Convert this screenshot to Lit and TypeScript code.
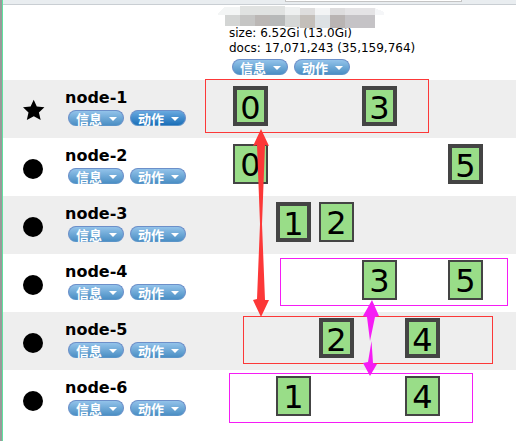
import { LitElement, html, css, svg } from "lit";
import { customElement, property } from "lit/decorators.js";

interface Shard {
  id: number;
  primary: boolean;
}

interface ClusterNode {
  name: string;
  master?: boolean;
  shards: Shard[];
}

const SHARD_COUNT = 6;

const p = (id: number): Shard => ({ id, primary: true });
const r = (id: number): Shard => ({ id, primary: false });

const NODES: ClusterNode[] = [
  { name: "node-1", master: true, shards: [p(0), p(3)] },
  { name: "node-2", shards: [r(0), p(5)] },
  { name: "node-3", shards: [p(1), r(2)] },
  { name: "node-4", shards: [r(3), r(5)] },
  { name: "node-5", shards: [p(2), p(4)] },
  { name: "node-6", shards: [r(1), r(4)] },
];

@customElement("menu-button")
export class MenuButton extends LitElement {
  @property() label = "";
  @property({ type: Boolean }) active = false;

  static styles = css`
    :host {
      display: block;
    }
    button {
      display: flex;
      align-items: center;
      gap: 7px;
      box-sizing: border-box;
      height: 16px;
      margin: 0;
      padding: 1px 6px 0 7px;
      border: 1px solid #6c8fc9;
      border-bottom-color: #5b94c8;
      border-radius: 8px;
      background: linear-gradient(#93c3ea, #4b8fc4);
      color: #fff;
      font: bold 13px/14px "Noto Sans CJK SC", sans-serif;
    }
    button.active {
      background: linear-gradient(#6aaae0, #1b6fb8);
    }
    .arrow {
      border: 4px solid transparent;
      border-top-color: #fff;
      border-bottom: 0;
    }
  `;

  render() {
    return html`<button class=${this.active ? "active" : ""} type="button">
      <span>${this.label}</span><span class="arrow"></span>
    </button>`;
  }
}

@customElement("app-root")
export class AppRoot extends LitElement {
  static styles = css`
    :host {
      display: block;
      position: relative;
      box-sizing: border-box;
      min-height: 100vh;
      overflow: hidden;
      border-left: 2px solid #999;
      background: #fff;
      color: #000;
      font: 12px/15px "DejaVu Sans", sans-serif;
    }
    .page {
      border-left: 1px solid #5fe3a1;
      min-height: 100vh;
    }
    .toolbar {
      display: flex;
      box-sizing: border-box;
      height: 5px;
      padding-left: 282px;
      border-bottom: 1px solid #c9ced3;
      background: #e9edf0;
    }
    .field {
      box-sizing: border-box;
      width: 177px;
      height: 2px;
      border: 1px solid #c4c4c4;
      border-top: 0;
      background: #fff;
    }
    table {
      width: 100%;
      border-collapse: collapse;
      table-layout: fixed;
    }
    .col-icon {
      width: 62px;
    }
    .col-name {
      width: 164px;
    }
    th,
    td {
      padding: 0;
      font-weight: normal;
      text-align: left;
      vertical-align: top;
    }
    .head {
      height: 75px;
      box-sizing: border-box;
      padding-top: 21px;
    }
    .buttons {
      display: flex;
      gap: 6px;
      padding: 3px 0 0 3px;
    }
    tbody tr {
      height: 58px;
    }
    tbody tr:nth-child(odd) {
      background: #eee;
    }
    .icon {
      display: block;
      margin: 18px 0 0 19px;
    }
    .name {
      padding-top: 8px;
      font-size: 16px;
      line-height: 20px;
      font-weight: bold;
    }
    .node-buttons {
      padding-top: 2px;
    }
    .shards {
      display: grid;
      grid-template-columns: repeat(6, 35px);
      gap: 8px;
      padding: 6px 0 0 4px;
    }
    .shard {
      box-sizing: border-box;
      height: 40px;
      border: 2px solid #444;
      background: #99dd88;
      font-size: 32px;
      line-height: 38px;
      text-align: center;
    }
    .primary {
      border-width: 4px;
      line-height: 36px;
    }
    .overlay {
      position: absolute;
      top: 0;
      left: -2px;
      pointer-events: none;
    }
  `;

  private icon(node: ClusterNode) {
    return html`<svg class="icon" width="24" height="24" viewBox="0 0 24 24" role="img" aria-label=${node.master ? "master" : "node"}>
      ${node.master
        ? svg`<path d="M11.7 1.800L14.800 8.600L22.400 9.300L16.900 14.400L18.700 22L11.800 18.300L4.800 22L6.500 14.400L1 9.300L8.600 8.600Z"/>`
        : svg`<circle cx="11" cy="13" r="10"/>`}
    </svg>`;
  }

  private row(node: ClusterNode) {
    return html`<tr>
      <td>${this.icon(node)}</td>
      <td>
        <div class="name">${node.name}</div>
        <div class="buttons node-buttons">
          <menu-button label="信息"></menu-button>
          <menu-button label="动作" ?active=${node.master}></menu-button>
        </div>
      </td>
      <td>
        <div class="shards">
          ${Array.from({ length: SHARD_COUNT }, (_, i) => {
            const s = node.shards.find((x) => x.id === i);
            return s
              ? html`<div class="shard ${s.primary ? "primary" : ""}">${s.id}</div>`
              : html`<div></div>`;
          })}
        </div>
      </td>
    </tr>`;
  }

  private annotations() {
    return html`<svg class="overlay" width="516" height="441" viewBox="0 0 516 441" aria-hidden="true">
      <g shape-rendering="crispEdges">
        <path fill="#f3f5f5" d="M218 14L224 7H285V15H218Z"/>
        <path fill="#e0e2e1" d="M240 6H285V15H240Z"/>
        <path fill="#d3d5d4" d="M225 15H240V26H225Z"/>
        <path fill="#c5c5c4" d="M240 15H255V26H240Z"/>
        <path fill="#bbb7b5" d="M255 15H270V26H255Z"/>
        <path fill="#b7b9b9" d="M270 15H285V26H270Z"/>
        <path fill="#d5d7d6" d="M285 15H300V27H285Z"/>
        <path fill="#eef0f0" d="M285 7H300V15H285Z"/>
        <path fill="#dedddd" d="M300 8H315V15H300Z"/>
        <path fill="#c4bfba" d="M300 15H315V28H300Z"/>
        <path fill="#f3f4f5" d="M315 8H330V15H315Z"/>
        <path fill="#dddcdd" d="M330 8H345V15H330Z"/>
        <path fill="#e4e3e5" d="M345 8H375V15H345Z"/>
        <path fill="#dde1e4" d="M315 15H330V28H315Z"/>
        <path fill="#b9b4b3" d="M330 15H345V28H330Z"/>
        <path fill="#c5c3c6" d="M345 15H375V28H345Z"/>
        <path fill="#f5f6f8" d="M375 8L384 12V15H375Z"/>
      </g>
      <g fill="none" shape-rendering="crispEdges">
        <path stroke="#fc3838" d="M205.5 79.5H428.5V132.5H205.5ZM243.5 316.5H492.5V363.5H243.5Z"/>
        <path stroke="#f51cf5" d="M280.5 258.5H507.5V305.5H280.5ZM229.5 373.5H472.5V422.5H229.5Z"/>
      </g>
      <path fill="#fc3838" d="M261 129L269 146L265 145L262 224L265 300H269L261 317L253 300L257 299L260 224L257 145L253 146Z"/>
      <path fill="#f51cf5" d="M372 300L379 316L375 317L370 341L367 317L363 316ZM371.500 341L373 363L377 364L370 376L363 363L368 362Z"/>
    </svg>`;
  }

  render() {
    return html`<div class="page">
        <div class="toolbar"><div class="field"></div></div>
        <table>
          <colgroup>
            <col class="col-icon" />
            <col class="col-name" />
            <col />
          </colgroup>
          <thead>
            <tr>
              <td></td>
              <td></td>
              <th scope="col">
                <div class="head">
                  <div>size: 6.52Gi (13.0Gi)</div>
                  <div>docs: 17,071,243 (35,159,764)</div>
                  <div class="buttons">
                    <menu-button label="信息"></menu-button>
                    <menu-button label="动作"></menu-button>
                  </div>
                </div>
              </th>
            </tr>
          </thead>
          <tbody>
            ${NODES.map((n) => this.row(n))}
          </tbody>
        </table>
      </div>
      ${this.annotations()}`;
  }
}
